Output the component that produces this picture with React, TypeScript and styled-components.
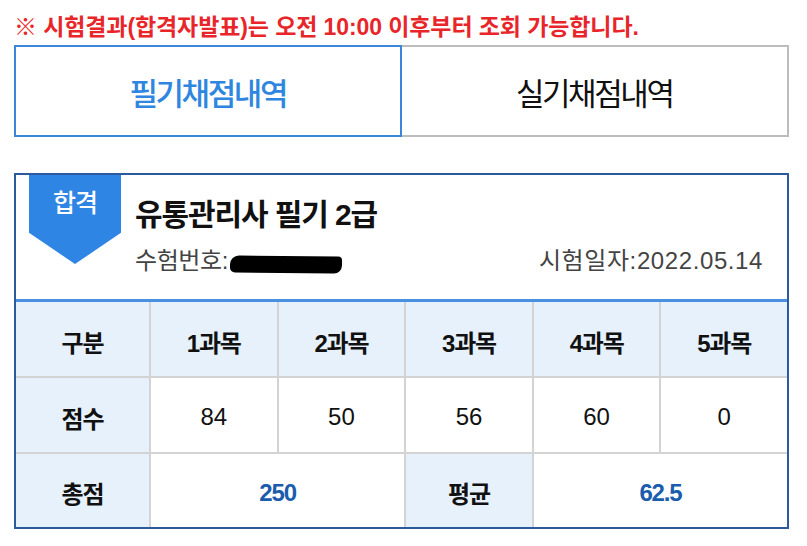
import React from "react";
import styled, { createGlobalStyle } from "styled-components";

const GlobalStyle = createGlobalStyle`
  html, body {
    margin: 0;
    padding: 0;
    background: #ffffff;
  }
  body {
    font-family: "Liberation Sans", "Noto Sans CJK KR", sans-serif;
    color: #111;
  }
  * { box-sizing: border-box; }
`;

const Page = styled.div`
  width: 807px;
  padding: 12px 18px 0 14px;
`;

const Notice = styled.p`
  margin: 0 0 3px 0;
  font-size: 23px;
  line-height: 30px;
  font-weight: 700;
  color: #e8262a;
  letter-spacing: -0.1px;
  white-space: nowrap;
`;

const Tabs = styled.div`
  display: grid;
  grid-template-columns: 1fr 1fr;
  height: 92px;
`;

const Tab = styled.div<{ $active?: boolean }>`
  display: flex;
  align-items: center;
  justify-content: center;
  border: 2px solid ${(p) => (p.$active ? "#3a86d8" : "#bdbdbd")};
  ${(p) => (p.$active ? "" : "border-left: none;")}
  color: ${(p) => (p.$active ? "#2f86e0" : "#111")};
  font-size: 31px;
  letter-spacing: -2.4px;
  font-weight: ${(p) => (p.$active ? 500 : 400)};
`;

const Card = styled.section`
  margin-top: 36px;
  border: 2px solid #2b5a9e;
`;

const CardHead = styled.div`
  display: flex;
  height: 127px;
  border-bottom: 3px solid #4a90e2;
`;

const Badge = styled.div`
  width: 92px;
  height: 89px;
  margin-left: 13px;
  padding-top: 12px;
  background: #2f85e4;
  color: #fff;
  font-size: 25px;
  line-height: 32px;
  font-weight: 500;
  letter-spacing: -1px;
  text-align: center;
  clip-path: polygon(0 0, 100% 0, 100% 65%, 50% 100%, 0 65%);
`;

const Info = styled.div`
  flex: 1;
  padding: 22px 24px 0 14px;
  display: flex;
  flex-direction: column;
  gap: 12px;
`;

const Title = styled.h2`
  margin: 0;
  font-size: 30px;
  line-height: 36px;
  font-weight: 700;
  letter-spacing: -1.1px;
  color: #111;
`;

const MetaRow = styled.div`
  display: flex;
  justify-content: space-between;
  align-items: center;
  font-size: 24px;
  line-height: 32px;
  color: #444;
`;

const Meta = styled.span<{ $wide?: boolean }>`
  display: inline-flex;
  align-items: center;
  letter-spacing: ${(p) => (p.$wide ? "0.6px" : "-0.4px")};
`;

const Redacted = styled.span`
  display: inline-block;
  width: 112px;
  height: 17px;
  margin-left: 2px;
  margin-top: 6px;
  background: #000;
  border-radius: 9px 4px 8px 5px;
  transform: rotate(0.6deg);
`;

const Grid = styled.div`
  display: grid;
  grid-template-columns: 133px repeat(5, 1fr);
  grid-template-rows: 74px 74px 73px;
  gap: 2px;
  background: #d3d3d3;
`;

const Cell = styled.div<{ $head?: boolean; $span?: number; $accent?: boolean; $bold?: boolean }>`
  display: flex;
  align-items: center;
  justify-content: center;
  background: ${(p) => (p.$head ? "#e7f1fc" : "#ffffff")};
  grid-column: span ${(p) => p.$span ?? 1};
  font-size: 24px;
  font-weight: ${(p) => (p.$bold || p.$accent ? 700 : 400)};
  color: ${(p) => (p.$accent ? "#1a5cad" : "#111")};
  letter-spacing: ${(p) => (p.$bold || p.$accent ? "-1.2px" : "0")};
  padding-top: 4px;
`;

const subjects = ["1과목", "2과목", "3과목", "4과목", "5과목"];
const scores = [84, 50, 56, 60, 0];

export default function App() {
  return (
    <>
      <GlobalStyle />
      <Page>
        <Notice>※ 시험결과(합격자발표)는 오전 10:00 이후부터 조회 가능합니다.</Notice>
        <Tabs>
          <Tab $active>필기채점내역</Tab>
          <Tab>실기채점내역</Tab>
        </Tabs>
        <Card>
          <CardHead>
            <Badge>합격</Badge>
            <Info>
              <Title>유통관리사 필기 2급</Title>
              <MetaRow>
                <Meta>
                  수험번호:
                  <Redacted />
                </Meta>
                <Meta $wide>시험일자:2022.05.14</Meta>
              </MetaRow>
            </Info>
          </CardHead>
          <Grid>
            <Cell $head $bold>구분</Cell>
            {subjects.map((s) => (
              <Cell key={s} $head $bold>{s}</Cell>
            ))}
            <Cell $head $bold>점수</Cell>
            {scores.map((s, i) => (
              <Cell key={i}>{s}</Cell>
            ))}
            <Cell $head $bold>총점</Cell>
            <Cell $span={2} $accent>250</Cell>
            <Cell $head $bold>평균</Cell>
            <Cell $span={2} $accent>62.5</Cell>
          </Grid>
        </Card>
      </Page>
    </>
  );
}
